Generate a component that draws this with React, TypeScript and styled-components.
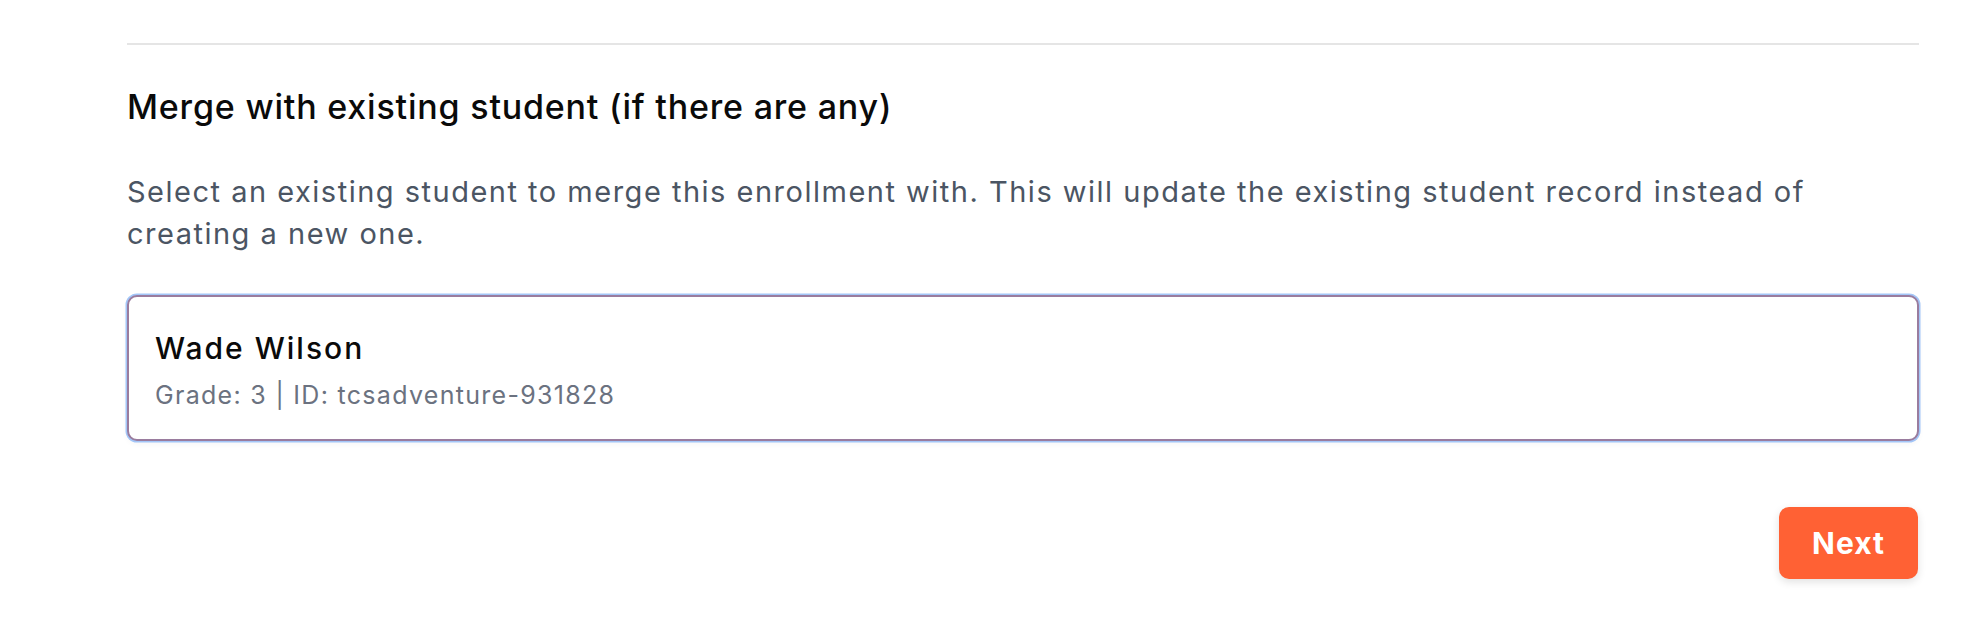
import styled, { createGlobalStyle } from 'styled-components';

const GlobalStyle = createGlobalStyle`
  html, body {
    margin: 0;
    padding: 0;
    background: #ffffff;
    font-family: Inter, 'Noto Sans', sans-serif;
  }
`;

const Page = styled.div`
  padding: 43px 67px 40px 127px;
`;

const Divider = styled.hr`
  margin: 0;
  border: none;
  height: 2px;
  background: #e5e5e5;
`;

const Title = styled.h2`
  margin: 41px 0 0;
  font-size: 34px;
  font-weight: 500;
  line-height: normal;
  letter-spacing: 0.8px;
  color: #0a0a0a;
`;

const Description = styled.p`
  margin: 44px 0 0;
  font-size: 29px;
  line-height: 42px;
  letter-spacing: 1.5px;
  color: #4b5563;
`;

const StudentOption = styled.button<{ selected?: boolean }>`
  display: flex;
  flex-direction: column;
  align-items: flex-start;
  width: 100%;
  margin-top: 40px;
  padding: 33px 26px 29px;
  background: #ffffff;
  border: 2px solid ${({ selected }) => (selected ? '#9a7c9e' : '#d1d5db')};
  border-radius: 10px;
  box-shadow: ${({ selected }) =>
    selected ? '0 0 0 1.5px #a3c6f8, 0 3px 6px rgba(0,0,0,0.04)' : 'none'};
  font-family: inherit;
  text-align: left;
  cursor: pointer;
`;

const StudentName = styled.span`
  font-size: 30px;
  font-weight: 500;
  line-height: normal;
  letter-spacing: 2px;
  color: #0a0a0a;
`;

const StudentMeta = styled.span`
  margin-top: 14px;
  font-size: 25px;
  line-height: normal;
  letter-spacing: 1.3px;
  color: #6b7280;
`;

const Footer = styled.div`
  display: flex;
  justify-content: flex-end;
  margin-top: 66px;
  padding-right: 1px;
`;

const NextButton = styled.button`
  height: 72px;
  padding: 0 33px;
  border: none;
  border-radius: 10px;
  background: #ff6134;
  color: #ffffff;
  font-family: inherit;
  font-size: 30px;
  font-weight: 700;
  letter-spacing: 1px;
  box-shadow: 0 3px 8px rgba(0, 0, 0, 0.12);
  cursor: pointer;
`;

export default function App() {
  return (
    <>
      <GlobalStyle />
      <Page>
        <Divider />
        <Title>Merge with existing student (if there are any)</Title>
        <Description>
          Select an existing student to merge this enrollment with. This will
          update the existing student record instead of creating a new one.
        </Description>
        <StudentOption type="button" selected>
          <StudentName>Wade Wilson</StudentName>
          <StudentMeta>Grade: 3 | ID: tcsadventure-931828</StudentMeta>
        </StudentOption>
        <Footer>
          <NextButton type="button">Next</NextButton>
        </Footer>
      </Page>
    </>
  );
}
